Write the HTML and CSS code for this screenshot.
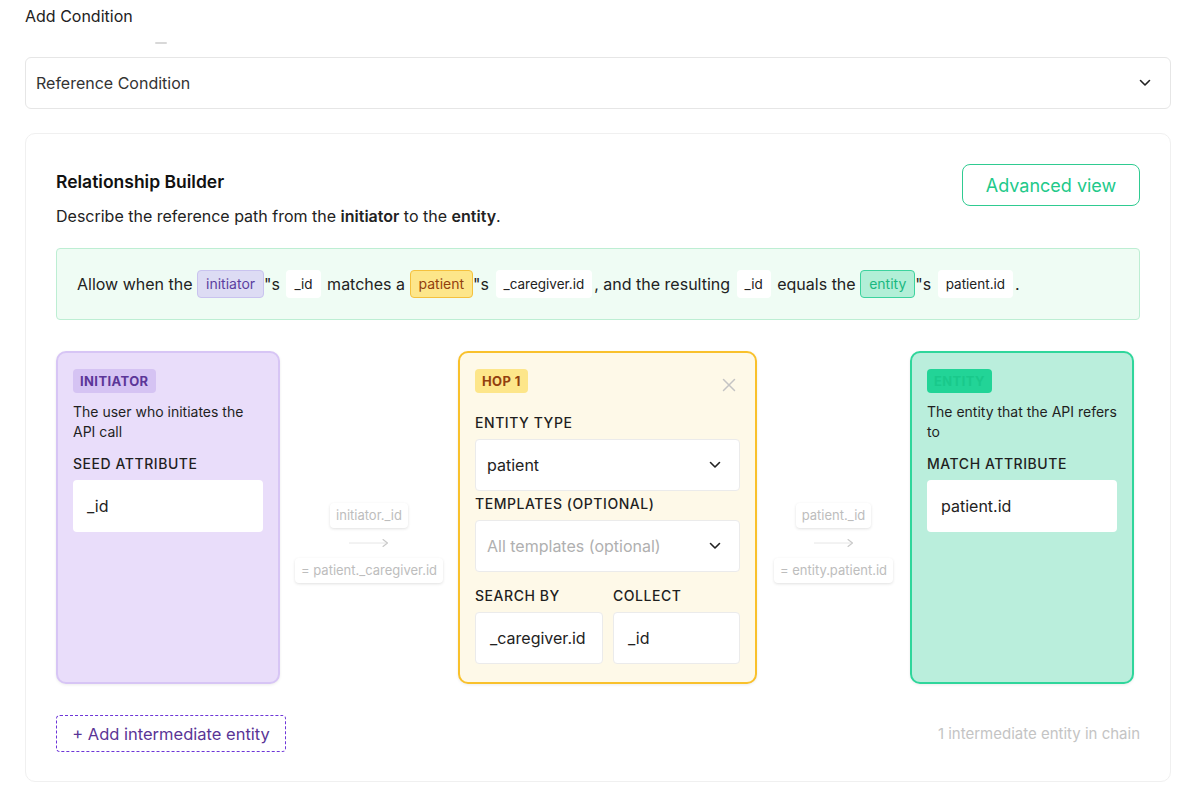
FILE: index.html
```html
<!DOCTYPE html>
<html>
<head>
<meta charset="utf-8">
<link rel="stylesheet" href="styles.css">
</head>
<body>
<div class="page">
  <div class="page-title">Add Condition</div>
  <div class="tick"></div>
  <div class="select main-select">
    <span>Reference Condition</span>
    <svg class="chev" width="12" height="8" viewBox="0 0 12 8"><path d="M1.5 1.5 L6 6 L10.5 1.5" fill="none" stroke="#222" stroke-width="1.6" stroke-linecap="round" stroke-linejoin="round"/></svg>
  </div>

  <div class="builder">
    <div class="header">
      <div class="header-text">
        <div class="title">Relationship Builder</div>
        <div class="desc">Describe the reference path from the <b>initiator</b> to the <b>entity</b>.</div>
      </div>
      <button class="adv-btn">Advanced view</button>
    </div>

    <div class="sentence">Allow when the <span class="chip chip-init">initiator</span>"s <span class="chip chip-code">_id</span> matches a <span class="chip chip-hop">patient</span>"s <span class="chip chip-code">_caregiver.id</span>, and the resulting <span class="chip chip-code">_id</span> equals the <span class="chip chip-ent">entity</span>"s <span class="chip chip-code">patient.id</span>.</div>

    <div class="chain">
      <div class="card card-init">
        <div class="badge badge-init">INITIATOR</div>
        <div class="card-desc">The user who initiates the API call</div>
        <div class="label lbl-first">SEED ATTRIBUTE</div>
        <div class="input">_id</div>
      </div>

      <div class="connector conn-1">
        <div class="pill">initiator._id</div>
        <svg class="arrow" width="44" height="12" viewBox="0 0 44 12"><path d="M2 6 H40" stroke="#e6e6e6" stroke-width="1"/><path d="M36 2.5 L40.5 6 L36 9.5" fill="none" stroke="#c8c8c8" stroke-width="1.1" stroke-linecap="round" stroke-linejoin="round"/></svg>
        <div class="pill">= patient._caregiver.id</div>
      </div>

      <div class="card card-hop">
        <div class="hop-head">
          <div class="badge badge-hop">HOP 1</div>
          <svg class="close" width="14" height="14" viewBox="0 0 14 14"><path d="M1.5 1.5 L12.5 12.5 M12.5 1.5 L1.5 12.5" stroke="#c4c4c4" stroke-width="1.5" stroke-linecap="round"/></svg>
        </div>
        <div class="label lbl-entity">ENTITY TYPE</div>
        <div class="select field-select">
          <span>patient</span>
          <svg class="chev" width="12" height="8" viewBox="0 0 12 8"><path d="M1.5 1.5 L6 6 L10.5 1.5" fill="none" stroke="#222" stroke-width="1.6" stroke-linecap="round" stroke-linejoin="round"/></svg>
        </div>
        <div class="label lbl-tmpl">TEMPLATES (OPTIONAL)</div>
        <div class="select field-select">
          <span class="placeholder">All templates (optional)</span>
          <svg class="chev" width="12" height="8" viewBox="0 0 12 8"><path d="M1.5 1.5 L6 6 L10.5 1.5" fill="none" stroke="#222" stroke-width="1.6" stroke-linecap="round" stroke-linejoin="round"/></svg>
        </div>
        <div class="pair">
          <div class="pair-col pair-a">
            <div class="label">SEARCH BY</div>
            <div class="input bordered">_caregiver.id</div>
          </div>
          <div class="pair-col pair-b">
            <div class="label">COLLECT</div>
            <div class="input bordered">_id</div>
          </div>
        </div>
      </div>

      <div class="connector conn-2">
        <div class="pill">patient._id</div>
        <svg class="arrow" width="44" height="12" viewBox="0 0 44 12"><path d="M2 6 H40" stroke="#e6e6e6" stroke-width="1"/><path d="M36 2.5 L40.5 6 L36 9.5" fill="none" stroke="#c8c8c8" stroke-width="1.1" stroke-linecap="round" stroke-linejoin="round"/></svg>
        <div class="pill">= entity.patient.id</div>
      </div>

      <div class="card card-ent">
        <div class="badge badge-ent">ENTITY</div>
        <div class="card-desc">The entity that the API refers to</div>
        <div class="label lbl-first">MATCH ATTRIBUTE</div>
        <div class="input">patient.id</div>
      </div>
    </div>

    <div class="footer">
      <button class="add-btn">+ Add intermediate entity</button>
      <div class="count">1 intermediate entity in chain</div>
    </div>
  </div>
</div>
</body>
</html>
```

FILE: styles.css
```css
* { box-sizing: border-box; }
html, body { margin: 0; padding: 0; background: #fff; }
body {
  font-family: Inter, "Noto Sans", "Liberation Sans", sans-serif;
  color: #1f1f1f;
  width: 1192px;
  height: 791px;
  overflow: hidden;
}
.page { padding: 6px 21px 0 25px; }
.page-title { font-size: 16px; line-height: 20px; color: #222; }
.tick {
  width: 12px; height: 2px; margin: 16px 0 0 130px;
  border-radius: 2px; background: #d8d8d8;
}
.select {
  display: flex; align-items: center; justify-content: space-between;
  background: #fff; border: 1px solid #e6e6e6; border-radius: 6px;
}
.main-select {
  margin-top: 13px; height: 52px; padding: 0 19px 0 10px;
  font-size: 16px; color: #333;
}
.chev { display: block; }

.builder {
  margin-top: 24px;
  border: 1px solid #f0f0f0; border-radius: 10px;
  padding: 30px 30px 29px 30px;
  height: 649px;
}
.header { display: flex; justify-content: space-between; align-items: flex-start; }
.title { margin-top: 6px; font-size: 17.5px; line-height: 24px; font-weight: 600; color: #111; }
.desc { margin-top: 11px; font-size: 16px; line-height: 22px; color: #222; }
.desc b { font-weight: 600; }
.adv-btn {
  font-family: inherit; font-size: 18px; color: #22c98a;
  background: #fff; border: 1px solid #2fcb91; border-radius: 8px;
  width: 178px; height: 42px; padding: 0; cursor: pointer;
}

.sentence {
  margin-top: 21px;
  background: #effcf4; border: 1px solid #bdeed3; border-radius: 4px;
  height: 72px; padding: 21px 20px;
  line-height: 28px; white-space: nowrap;
  font-size: 16px; color: #222;
}
.chip {
  display: inline-block; height: 28px; line-height: 26px; vertical-align: top;
  padding: 0 8px; border-radius: 4px; font-size: 14px;
  border: 1px solid transparent;
}
.chip-init { background: #dddcf4; border-color: #c9c3ef; color: #5b3fa0; }
.chip-hop { background: #fde68a; border-color: #f5c13d; color: #92400e; }
.chip-ent { background: #b2efd7; border-color: #3dd39e; color: #19b880; }
.chip-code { background: #fff; color: #222; font-size: 13.5px; padding: 0 7px; margin: 0 2px; }

.chain { display: flex; align-items: stretch; gap: 16px; margin-top: 31px; height: 333px; }
.card {
  flex: 0 0 auto;
  border: 2px solid; border-radius: 10px; padding: 16px 15px 15px;
  box-shadow: 0 1px 3px rgba(0,0,0,0.08);
}
.card-init { width: 224px; background: #e9ddfa; border-color: #d7c5f5; }
.card-ent { width: 224px; background: #baeedc; border-color: #2fd69b; }
.card-hop { width: 299px; background: #fef9e8; border-color: #f9c12c; }
.badge {
  display: inline-block; height: 24px; line-height: 24px;
  padding: 0 7px; border-radius: 4px;
  font-size: 13px; font-weight: 700; letter-spacing: 0.4px;
}
.badge-init { background: #d5c3f3; color: #5b3598; }
.badge-hop { background: #fde68a; color: #92400e; }
.badge-ent { background: #22d497; color: #19c98b; }
.card-desc { margin-top: 9px; margin-right: -3px; font-size: 14px; line-height: 19.5px; color: #1f1f1f; }
.label {
  font-size: 14px; line-height: 20px; font-weight: 500;
  letter-spacing: 0.55px; color: #1f1f1f;
}
.lbl-first { margin-top: 13px; }
.input {
  margin-top: 6px; height: 52px; background: #fff; border-radius: 4px;
  display: flex; align-items: center; padding: 0 14px;
  font-size: 16px; color: #222;
}
.input.bordered { border: 1px solid #ebebeb; padding: 0 14px; }
.hop-head { display: flex; justify-content: space-between; align-items: flex-start; }
.close { margin-top: 9px; margin-right: 4px; }
.lbl-entity { margin-top: 20px; }
.lbl-tmpl { margin-top: 3px; }
.field-select {
  margin-top: 6px; height: 52px; padding: 0 18px 0 11px;
  border-color: #ebebeb; border-radius: 4px;
  font-size: 16px; color: #222;
}
.placeholder { color: #b0b0b0; }
.pair { display: flex; gap: 10px; margin-top: 14px; }
.pair-a { flex: 0 0 128px; }
.pair-b { flex: 1 1 auto; }

.connector {
  flex: 0 0 auto;
  display: flex; flex-direction: column; align-items: center;
  padding-top: 152px;
}
.conn-1 { width: 146px; }
.conn-2 { width: 121px; }
.pill {
  height: 25px; line-height: 25px; padding: 0 6px;
  background: #fff; border-radius: 4px;
  box-shadow: 0 1px 3px rgba(0,0,0,0.12);
  font-size: 13px; color: #bdbdbd; white-space: nowrap;
}
.arrow { display: block; margin: 9px 0 9px; }

.footer {
  display: flex; justify-content: space-between; align-items: center;
  margin-top: 31px;
}
.add-btn {
  font-family: inherit; font-size: 16.5px; color: #5a3596;
  background: #fff; border: 1px dashed #6d35d8; border-radius: 4px;
  height: 37px; width: 230px; padding: 0; cursor: pointer;
}
.count { font-size: 15px; color: #c4c4c4; }
```
